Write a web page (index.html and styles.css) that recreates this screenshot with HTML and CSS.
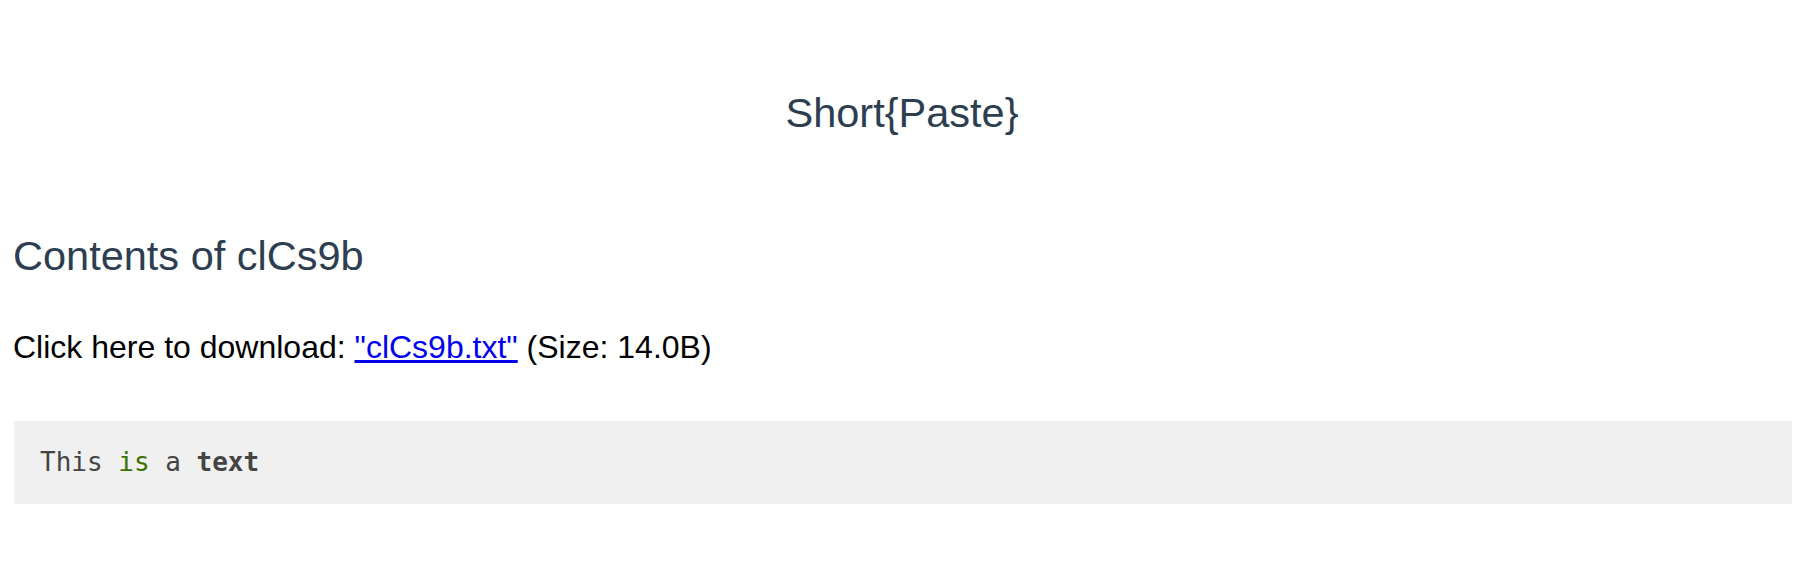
FILE: index.html
```html
<!DOCTYPE html>
<html lang="en">
<head>
<meta charset="utf-8">
<title>Short{Paste}</title>
<link rel="stylesheet" href="styles.css">
</head>
<body>
<div class="app">
  <header class="brand">Short{Paste}</header>
  <main class="content">
    <h2 class="paste-title">Contents of clCs9b</h2>
    <p class="download">Click here to download: <a class="download-link" href="#">"clCs9b.txt"</a> (Size: 14.0B)</p>
    <pre class="code"><code>This <span class="builtin">is</span> a <span class="keyword">text</span></code></pre>
  </main>
</div>
</body>
</html>
```

FILE: styles.css
```css
html, body {
  margin: 0;
  padding: 0;
  background: #ffffff;
}

body {
  font-family: "Liberation Sans", Arial, Helvetica, sans-serif;
  color: #000000;
}

.app {
  padding: 89px 12px 0 14px;
}

.brand {
  font-size: 41.5px;
  line-height: 48px;
  color: #2c3e50;
  text-align: center;
  margin-left: -2px;
}

.content {
  padding-top: 95px;
}

.paste-title {
  margin: 0;
  font-size: 41.5px;
  line-height: 48px;
  font-weight: normal;
  color: #2c3e50;
  margin-left: -1px;
}

.download {
  margin: 49px 0 0 -1px;
  font-size: 32px;
  line-height: 37px;
}

.download-link {
  color: #0000ee;
  text-decoration: underline;
}

.code {
  margin: 55px 0 0 0;
  padding: 27px 26px 25px 26px;
  background: #f0f0f0;
  color: #444444;
  font-family: "Liberation Mono", "Courier New", monospace;
  font-size: 26px;
  line-height: 29px;
}

.builtin {
  color: #397300;
}

.keyword {
  font-weight: bold;
}
```
